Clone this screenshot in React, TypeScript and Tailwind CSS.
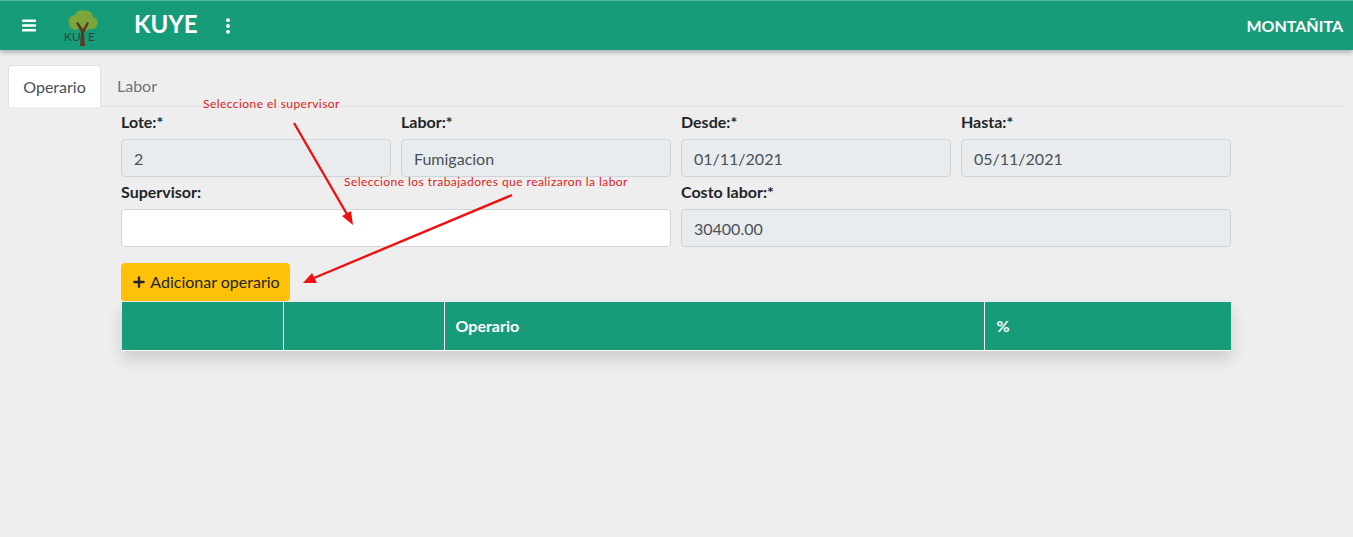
import { Plus } from 'lucide-react'

const font = 'font-["Lato","Noto_Sans",sans-serif]'

function Field({ label, value, white, className }: { label: string; value?: string; white?: boolean; className?: string }) {
  return (
    <div className={className}>
      <label className="block h-[32px] pt-[3px] text-[16px] leading-[24px] font-bold text-[#212529]">{label}</label>
      <div
        className={`h-[38px] mb-[0px] rounded-[4px] border border-[#ced4da] px-3 text-[16px] leading-[38px] text-[#495057] ${
          white ? 'bg-white' : 'bg-[#e9ecef]'
        }`}
      >
        {value}
      </div>
    </div>
  )
}

function Logo() {
  return (
    <div className="relative w-[40px] h-[42px] ml-[26px]">
      <svg width="40" height="42" viewBox="0 0 40 42">
        <path
          d="M7 20c-2-5 2-9 6-9 1-4 6-6 10-4 4-1 8 2 8 6 4 1 6 5 4 8-1 4-5 5-8 4-3 2-7 2-10 0-4 2-9 0-10-5z"
          fill="#7aa63c"
        />
        <path d="M18 42l1-14-5-9 2-1 5 7 4-7 2 1-5 10 1 13z" fill="#5b3a22" />
      </svg>
      <span className="absolute left-[2px] top-[25px] text-[12px] leading-[16px] text-[#2d4a2a]">KU</span>
      <span className="absolute left-[26px] top-[25px] text-[12px] leading-[16px] text-[#2d4a2a]">E</span>
    </div>
  )
}

export default function App() {
  return (
    <div className={`relative min-h-[537px] bg-[#eeeeee] overflow-hidden ${font}`}>
      {/* Navbar */}
      <nav className="h-[50px] flex items-center bg-[#179c7a] border-t border-[#4fb89c] shadow-[0_2px_5px_rgba(0,0,0,0.3)] pl-[22px] pr-[10px] text-white">
        <svg width="14" height="13" viewBox="0 0 14 13" fill="#fff">
          <rect y="0.5" width="14" height="2.4" rx="0.6" />
          <rect y="5.3" width="14" height="2.4" rx="0.6" />
          <rect y="10.1" width="14" height="2.4" rx="0.6" />
        </svg>
        <div className="-mt-[1px]"><Logo /></div>
        <span className="ml-[32px] -mt-[3px] text-[24px] leading-[30px] font-bold">KUYE</span>
        <svg className="ml-[28px]" width="4" height="16" viewBox="0 0 4 16" fill="#fff">
          <circle cx="2" cy="2.2" r="1.9" />
          <circle cx="2" cy="8" r="1.9" />
          <circle cx="2" cy="13.8" r="1.9" />
        </svg>
        <span className="ml-auto text-[16px] font-bold">MONTAÑITA</span>
      </nav>

      {/* Tabs */}
      <div className="mt-[15px] mx-[8px] flex h-[42px] border-b border-[#dee2e6] text-[16px]">
        <div className="w-[93px] h-[42px] bg-white rounded-t-[4px] border border-b-0 border-[#dee2e6] text-center leading-[42px] text-[#495057]">
          Operario
        </div>
        <div className="w-[72px] text-center leading-[42px] text-[#6c757d]">Labor</div>
      </div>

      {/* Form */}
      <div className="w-[1110px] ml-[121px]">
        <div className="grid grid-cols-4 gap-x-[10px]">
          <Field label="Lote:*" value="2" />
          <Field label="Labor:*" value="Fumigacion" />
          <Field label="Desde:*" value="01/11/2021" />
          <Field label="Hasta:*" value="05/11/2021" />
        </div>
        <div className="grid grid-cols-2 gap-x-[10px]">
          <Field label="Supervisor:" white />
          <Field label="Costo labor:*" value="30400.00" />
        </div>
        <button className="mt-[16px] h-[38px] w-[169px] flex items-center justify-center gap-[3px] rounded-[4px] bg-[#ffc107] text-[16px] text-[#212529]">
          <Plus size={16} strokeWidth={3.5} />
          Adicionar operario
        </button>
        <table className="mt-[1px] ml-[1px] w-[1109px] table-fixed shadow-[0_8px_16px_rgba(0,0,0,0.15)] border-b border-white bg-[#179c7a] text-white">
          <thead>
            <tr className="h-[48px] text-left text-[16px] font-bold">
              <th className="w-[161px] border-r border-white" />
              <th className="w-[161px] border-r border-white" />
              <th className="w-[540px] border-r border-white pl-[11px]">Operario</th>
              <th className="pl-[12px]">%</th>
            </tr>
          </thead>
        </table>
      </div>

      {/* Annotations laid over the form */}
      <span className="absolute left-[203px] top-[96px] text-[12px] leading-[16px] tracking-[0.45px] text-[#e01b1b]">
        Seleccione el supervisor
      </span>
      <span className="absolute left-[344px] top-[174px] text-[12px] leading-[16px] tracking-[0.45px] text-[#e01b1b]">
        Seleccione los trabajadores que realizaron la labor
      </span>
      <svg className="absolute left-0 top-0 pointer-events-none" width="1353" height="537" fill="#ee1111">
        <line x1="294" y1="123" x2="348" y2="216" stroke="#ee1111" strokeWidth="2.4" />
        <polygon points="353,225 342,216 351,211" />
        <line x1="512" y1="195" x2="314" y2="278" stroke="#ee1111" strokeWidth="2.4" />
        <polygon points="303,283 312,273 317,283" />
      </svg>
    </div>
  )
}
